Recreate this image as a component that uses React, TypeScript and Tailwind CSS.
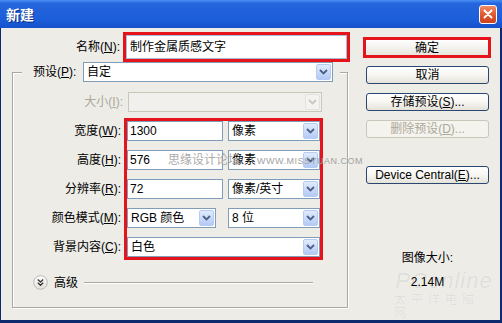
const font = "font-['Liberation_Sans','Noto_Sans_CJK_SC',sans-serif]";

function Arrow({ disabled }: { disabled?: boolean }) {
    return (
        <div
            className={`w-[15px] h-full shrink-0 flex items-center justify-center rounded-[2px] border ${
                disabled
                    ? 'border-[#E3E2DC] bg-[#F4F3EF]'
                    : 'border-[#B7CBF2] bg-gradient-to-b from-[#E1EBFD] to-[#B4CAF5]'
            }`}
        >
            <svg width="9" height="6" viewBox="0 0 9 6">
                <path d="M1 1l3.5 3.5L8 1" fill="none" stroke={disabled ? '#C9C8C0' : '#4D6185'} strokeWidth="1.8" />
            </svg>
        </div>
    );
}

function Select({ value, className, disabled }: { value: string; className: string; disabled?: boolean }) {
    return (
        <div
            className={`h-[20px] flex items-center p-px border ${
                disabled ? 'border-[#C9C7BA] bg-[#F1F0EC]' : 'border-[#7F9DB9] bg-white'
            } ${className}`}
        >
            <span className="flex-1 pl-[2px] leading-none whitespace-nowrap">{value}</span>
            <Arrow disabled={disabled} />
        </div>
    );
}

function Field({ value, className }: { value: string; className: string }) {
    return (
        <div className={`h-[20px] flex items-center pl-[2px] border border-[#7F9DB9] bg-white ${className}`}>
            {value}
        </div>
    );
}

function Btn({ children, disabled, className = '' }: any) {
    return (
        <div
            className={`h-[18px] w-[123px] flex items-center justify-center rounded-[3px] border leading-none ${
                disabled
                    ? 'border-[#C9C7BA] bg-[#F4F3EE] text-[#ACA899]'
                    : 'border-[#2A4770] bg-gradient-to-b from-white via-[#F7F6F2] to-[#E4E2DA]'
            } ${className}`}
        >
            {children}
        </div>
    );
}

function Label({ children, className = '' }: any) {
    return <div className={`h-[20px] flex items-center justify-end whitespace-nowrap ${className}`}>{children}</div>;
}

export default function App() {
    return (
        <div className={`w-[502px] h-[323px] flex flex-col ${font} text-[12px] text-black`}>
            {/* title bar */}
            <div className="h-[28px] shrink-0 flex items-center bg-[linear-gradient(to_bottom,#4B8EF4_0%,#2566DE_12%,#1C5DD9_70%,#1452CC_100%)]">
                <span className="ml-[6px] text-[14px] font-bold text-white font-['Noto_Sans_CJK_SC',sans-serif] [text-shadow:1px_1px_0_#0A2E86]">
                    新建
                </span>
                <div className="ml-auto mr-[5px] w-[18px] h-[19px] rounded-[3px] border border-white bg-gradient-to-b from-[#F08A64] via-[#E2582F] to-[#C8431E] flex items-center justify-center">
                    <svg width="10" height="10" viewBox="0 0 10 10">
                        <path d="M1.5 1.5l7 7M8.5 1.5l-7 7" stroke="white" strokeWidth="2" strokeLinecap="round" />
                    </svg>
                </div>
            </div>

            {/* body */}
            <div className="flex-1 flex relative bg-[#EDECE7] border-l border-r-2 border-b-[3px] border-[#0D2A6E]">
                {/* left column */}
                <div className="w-[362px] shrink-0 flex flex-col">
                    <div className="mt-[4px] h-[30px] flex items-center">
                        <div className="w-[119px] text-right">
                            名称(<u>N</u>):
                        </div>
                        <div className="ml-[3px] w-[227px] h-[30px] border-[3px] border-[#E5141B]">
                            <div className="h-full flex items-center pl-[3px] bg-white border border-[#A9BCD3]">
                                制作金属质感文字
                            </div>
                        </div>
                    </div>

                    <fieldset className="ml-[11px] w-[336px] border border-[#A8A8A4] shadow-[inset_1px_1px_0_#FFFFFF,1px_1px_0_#FFFFFF] pt-[10px] pb-[17px]">
                        <legend className="ml-[9px] pl-[11px] pr-[7px] bg-[#EDECE7]">
                            <div className="h-[20px] flex items-center">
                                <div className="w-[47px] whitespace-nowrap">
                                    预设(<u>P</u>):
                                </div>
                                <Select value="自定" className="ml-[3px] w-[250px]" />
                            </div>
                        </legend>

                        <div className="flex items-center">
                            <Label className="w-[110px] text-[#ACA899]">
                                大小(<u>I</u>):
                            </Label>
                            <Select value="" disabled className="ml-[5px] w-[194px]" />
                        </div>

                        <div className="mt-[6px] flex">
                            <div className="w-[108px] pt-[3px] flex flex-col gap-[9px]">
                                <Label>
                                    宽度(<u>W</u>):
                                </Label>
                                <Label>
                                    高度(<u>H</u>):
                                </Label>
                                <Label>
                                    分辨率(<u>R</u>):
                                </Label>
                                <Label>
                                    颜色模式(<u>M</u>):
                                </Label>
                                <Label>
                                    背景内容(<u>C</u>):
                                </Label>
                            </div>
                            <div className="ml-[3px] w-[199px] border-[3px] border-[#E5141B] flex flex-col gap-[9px]">
                                <div className="flex">
                                    <Field value="1300" className="w-[96px]" />
                                    <Select value="像素" className="ml-[5px] w-[92px]" />
                                </div>
                                <div className="flex">
                                    <Field value="576" className="w-[96px]" />
                                    <Select value="像素" className="ml-[5px] w-[92px]" />
                                </div>
                                <div className="flex">
                                    <Field value="72" className="w-[96px]" />
                                    <Select value="像素/英寸" className="ml-[5px] w-[92px]" />
                                </div>
                                <div className="flex">
                                    <Select value="RGB 颜色" className="w-[89px]" />
                                    <Select value="8 位" className="ml-[12px] w-[92px]" />
                                </div>
                                <Select value="白色" className="w-full" />
                            </div>
                        </div>

                        <div className="mt-[15px] h-[15px] flex items-center mr-[34px]">
                            <svg className="ml-[20px] shrink-0" width="15" height="15" viewBox="0 0 15 15">
                                <defs>
                                    <linearGradient id="adv" x1="0" y1="0" x2="0" y2="1">
                                        <stop offset="0" stopColor="#FFFFFF" />
                                        <stop offset="1" stopColor="#E2E1DC" />
                                    </linearGradient>
                                </defs>
                                <circle cx="7.5" cy="7.5" r="6.8" fill="url(#adv)" stroke="#B9B8B2" />
                                <path d="M4.8 4.6l2.7 2.4 2.7-2.4M4.8 7.8l2.7 2.4 2.7-2.4" fill="none" stroke="#3A3A3A" strokeWidth="1.4" />
                            </svg>
                            <span className="ml-[6px]">高级</span>
                            <div className="ml-[6px] flex-1 h-px bg-[#A8A8A4] shadow-[0_1px_0_#FFFFFF]" />
                        </div>
                    </fieldset>
                </div>

                {/* right column */}
                <div className="flex flex-col">
                    <div className="mt-[9px] w-[128px] h-[21px] border-[3px] border-[#E5141B] bg-gradient-to-b from-white to-[#E8E6DE] flex items-center justify-center leading-none">
                        确定
                    </div>
                    <Btn className="mt-[8px] ml-[3px]">取消</Btn>
                    <Btn className="mt-[9px] ml-[3px]">
                        存储预设(<u>S</u>)...
                    </Btn>
                    <Btn disabled className="mt-[9px] ml-[3px]">
                        删除预设(<u>D</u>)...
                    </Btn>
                    <Btn className="mt-[28px] ml-[3px]">
                        Device Central(<u>E</u>)...
                    </Btn>
                    <div className="mt-[67px] ml-[3px] w-[123px] h-[14px] leading-[14px] text-center">图像大小:</div>
                    <div className="mt-[10px] ml-[3px] w-[123px] h-[14px] leading-[14px] text-center relative z-10">2.14M</div>
                </div>

                {/* watermarks */}
                <div className="absolute left-[167px] top-[124px] leading-[16px] text-[#ABABAB] pointer-events-none">
                    思缘设计论坛
                </div>
                <div className="absolute left-[256px] top-[127px] leading-[12px] text-[9px] tracking-[0.5px] text-[#A2A2A2] pointer-events-none">
                    WWW.MISSYUAN.COM
                </div>
                <div className="absolute left-[393px] top-[242px] w-[100px] flex flex-col items-center text-[#DEDEDB] pointer-events-none">
                    <span className="text-[22px] leading-[22px] italic tracking-[1px] [text-shadow:0_0_1px_#FFFFFF]">PConline</span>
                    <span className="mt-[2px] text-[12px] leading-[13px] tracking-[5px] [text-shadow:0_0_1px_#FFFFFF]">太平洋电脑网</span>
                </div>
            </div>
        </div>
    );
}
